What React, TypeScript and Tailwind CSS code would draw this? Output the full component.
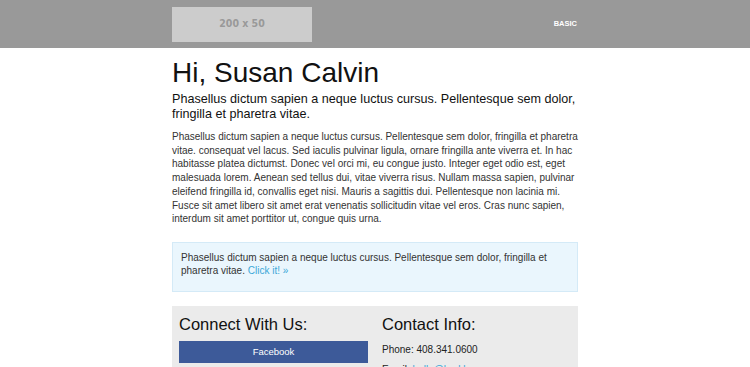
import React from "react";

export default function App() {
  const font = { fontFamily: '"Liberation Sans", Arial, sans-serif' };
  return (
    <div className="min-h-[367px] bg-white" style={font}>
      <div className="h-[48px] bg-[#999999]">
        <div className="mx-auto flex h-full w-[406px] items-center justify-between">
          <div className="flex h-[35px] w-[140px] items-center justify-center bg-[#cccccc]">
            <span className="text-[10.5px] font-bold text-[#999999]" style={{ fontFamily: '"DejaVu Sans Condensed", "DejaVu Sans", sans-serif' }}>
              200 x 50
            </span>
          </div>
          <span className="pr-[1px] text-[7.5px] font-bold text-white">BASIC</span>
        </div>
      </div>
      <div className="mx-auto w-[406px]">
        <h1 className="mt-[9px] text-[28px] leading-[31px] text-[#111]">Hi, Susan Calvin</h1>
        <p className="mt-[4px] text-[12.6px] leading-[15px] text-[#111]">
          Phasellus dictum sapien a neque luctus cursus. Pellentesque sem dolor, fringilla et pharetra vitae.
        </p>
        <p className="mt-[8px] text-[10px] leading-[13.7px] text-[#333]">
          Phasellus dictum sapien a neque luctus cursus. Pellentesque sem dolor, fringilla et pharetra vitae. consequat vel lacus. Sed iaculis pulvinar ligula, ornare fringilla ante viverra et. In hac habitasse platea dictumst. Donec vel orci mi, eu congue justo. Integer eget odio est, eget malesuada lorem. Aenean sed tellus dui, vitae viverra risus. Nullam massa sapien, pulvinar eleifend fringilla id, convallis eget nisi. Mauris a sagittis dui. Pellentesque non lacinia mi. Fusce sit amet libero sit amet erat venenatis sollicitudin vitae vel eros. Cras nunc sapien, interdum sit amet porttitor ut, congue quis urna.
        </p>
        <div className="mt-[16px] border border-[#d4eaf7] bg-[#eaf6fd] px-[8px] pt-[8px] pb-[14px]">
          <p className="text-[10px] leading-[13px] text-[#333]">
            Phasellus dictum sapien a neque luctus cursus. Pellentesque sem dolor, fringilla et pharetra vitae.{" "}
            <a className="text-[#3aa8d8]">Click it! »</a>
          </p>
        </div>
        <div className="mt-[14px] grid grid-cols-2 gap-[14px] bg-[#ebebeb] p-[7px]">
          <div>
            <h3 className="mt-[1px] text-[16.5px] leading-[20px] text-[#111]">Connect With Us:</h3>
            <div className="mt-[7px] flex h-[22px] items-center justify-center bg-[#3d5a99] text-[9.5px] text-white">Facebook</div>
          </div>
          <div>
            <h3 className="mt-[1px] text-[16.5px] leading-[20px] text-[#111]">Contact Info:</h3>
            <p className="mt-[7px] text-[10px] leading-[17px] text-[#222]">Phone: 408.341.0600</p>
            <p className="mt-[3px] text-[10px] leading-[17px] text-[#222]">
              Email: <a className="text-[#3aa8d8]">hello@barkley.com</a>
            </p>
          </div>
        </div>
      </div>
    </div>
  );
}
